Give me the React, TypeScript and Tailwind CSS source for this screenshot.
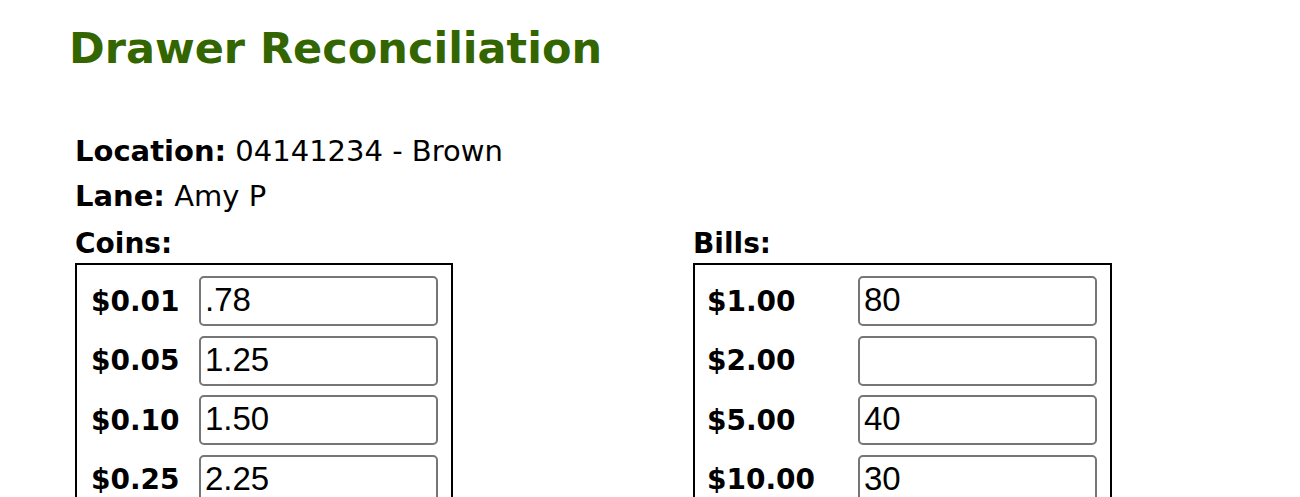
import React from 'react';

type Denomination = {
  label: string;
  value: string;
};

const coins: Denomination[] = [
  { label: '$0.01', value: '.78' },
  { label: '$0.05', value: '1.25' },
  { label: '$0.10', value: '1.50' },
  { label: '$0.25', value: '2.25' },
  { label: '$0.50', value: '' },
  { label: '$1.00', value: '' },
];

const bills: Denomination[] = [
  { label: '$1.00', value: '80' },
  { label: '$2.00', value: '' },
  { label: '$5.00', value: '40' },
  { label: '$10.00', value: '30' },
  { label: '$20.00', value: '' },
  { label: '$50.00', value: '' },
  { label: '$100.00', value: '' },
];

const CountBox: React.FC<{
  title: string;
  rows: Denomination[];
  wide?: boolean;
}> = ({ title, rows, wide }) => {
  return (
    <div>
      <h2 className="pt-[4px] text-[28px] font-bold leading-[41px]">{title}</h2>
      <div
        className={`-mt-[1px] border-2 border-black pt-[11px] pr-[13px] pb-[11px] flex flex-col gap-[9.5px] ${
          wide ? 'w-[419px] pl-[12px]' : 'w-[378px] pl-[14px]'
        }`}
      >
        {rows.map((row) => (
          <div key={row.label} className="flex items-center">
            <span
              className={`text-[28px] font-bold leading-[33px] ${wide ? 'w-[151px]' : 'w-[108px]'}`}
            >
              {row.label}
            </span>
            <input
              type="text"
              defaultValue={row.value}
              className="w-[239px] h-[50px] border-2 border-[#767676] rounded-[5px] px-[4px] pt-0 pb-[2px] text-[33px] text-black bg-white outline-none font-['Liberation_Sans',Arial,sans-serif]"
            />
          </div>
        ))}
      </div>
    </div>
  );
};

export default function App() {
  return (
    <div className="min-h-screen bg-white pl-[75px] pt-[23px] text-black font-['DejaVu_Sans',Verdana,sans-serif]">
      <h1 className="-ml-[6px] text-[43px] leading-[50px] font-bold text-[#336600]">
        Drawer Reconciliation
      </h1>

      <div className="mt-[56px] leading-[45px]">
        <p className="text-[29px]">
          <b>Location:</b> 04141234 - Brown
        </p>
        <p className="text-[29px]">
          <b>Lane:</b> Amy P
        </p>

        <div className="flex">
          <div className="w-[618px]">
            <CountBox title="Coins:" rows={coins} />
          </div>
          <CountBox title="Bills:" rows={bills} wide />
        </div>
      </div>
    </div>
  );
}
